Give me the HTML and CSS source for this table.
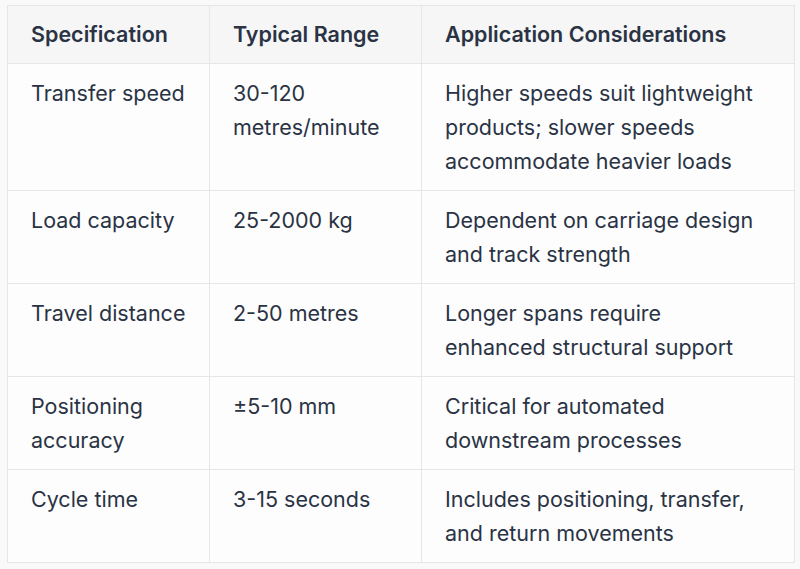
FILE: index.html
```html
<!DOCTYPE html>
<html>
<head>
<meta charset="utf-8">
<link rel="stylesheet" href="styles.css">
</head>
<body>
<table class="spec">
  <colgroup>
    <col class="c1"><col class="c2"><col class="c3">
  </colgroup>
  <thead>
    <tr><th>Specification</th><th>Typical Range</th><th class="notes">Application Considerations</th></tr>
  </thead>
  <tbody>
    <tr><td>Transfer speed</td><td>30-120 metres/minute</td><td class="notes">Higher speeds suit lightweight products; slower speeds accommodate heavier loads</td></tr>
    <tr><td>Load capacity</td><td>25-2000 kg</td><td class="notes">Dependent on carriage design and track strength</td></tr>
    <tr><td>Travel distance</td><td>2-50 metres</td><td class="notes">Longer spans require enhanced structural support</td></tr>
    <tr><td>Positioning accuracy</td><td>±5-10 mm</td><td class="notes">Critical for automated downstream processes</td></tr>
    <tr><td>Cycle time</td><td>3-15 seconds</td><td class="notes">Includes positioning, transfer, and return movements</td></tr>
  </tbody>
</table>
</body>
</html>
```

FILE: styles.css
```css
html, body {
  margin: 0;
  padding: 0;
  background: #f9f9f9;
}
body {
  padding: 5px 7px;
  font-family: Inter, "Noto Sans", sans-serif;
  color: #2a3344;
}
.spec {
  border-collapse: collapse;
  table-layout: fixed;
  width: 787px;
  background: #fdfdfd;
  border: 1px solid #e6e6e6;
  font-size: 21.5px;
  line-height: 34px;
}
.c1 { width: 202px; }
.c2 { width: 212px; }
.c3 { width: 373px; }
.spec th, .spec td {
  border: 1px solid #e6e6e6;
  padding: 12px 10px 12px 23px;
  text-align: left;
  vertical-align: top;
}
.spec th {
  background: #f6f6f7;
  font-weight: 600;
  padding-top: 11px;
  padding-bottom: 12px;
}
.spec td {
  font-weight: 400;
}
.spec .notes {
  padding-right: 36px;
}
```
